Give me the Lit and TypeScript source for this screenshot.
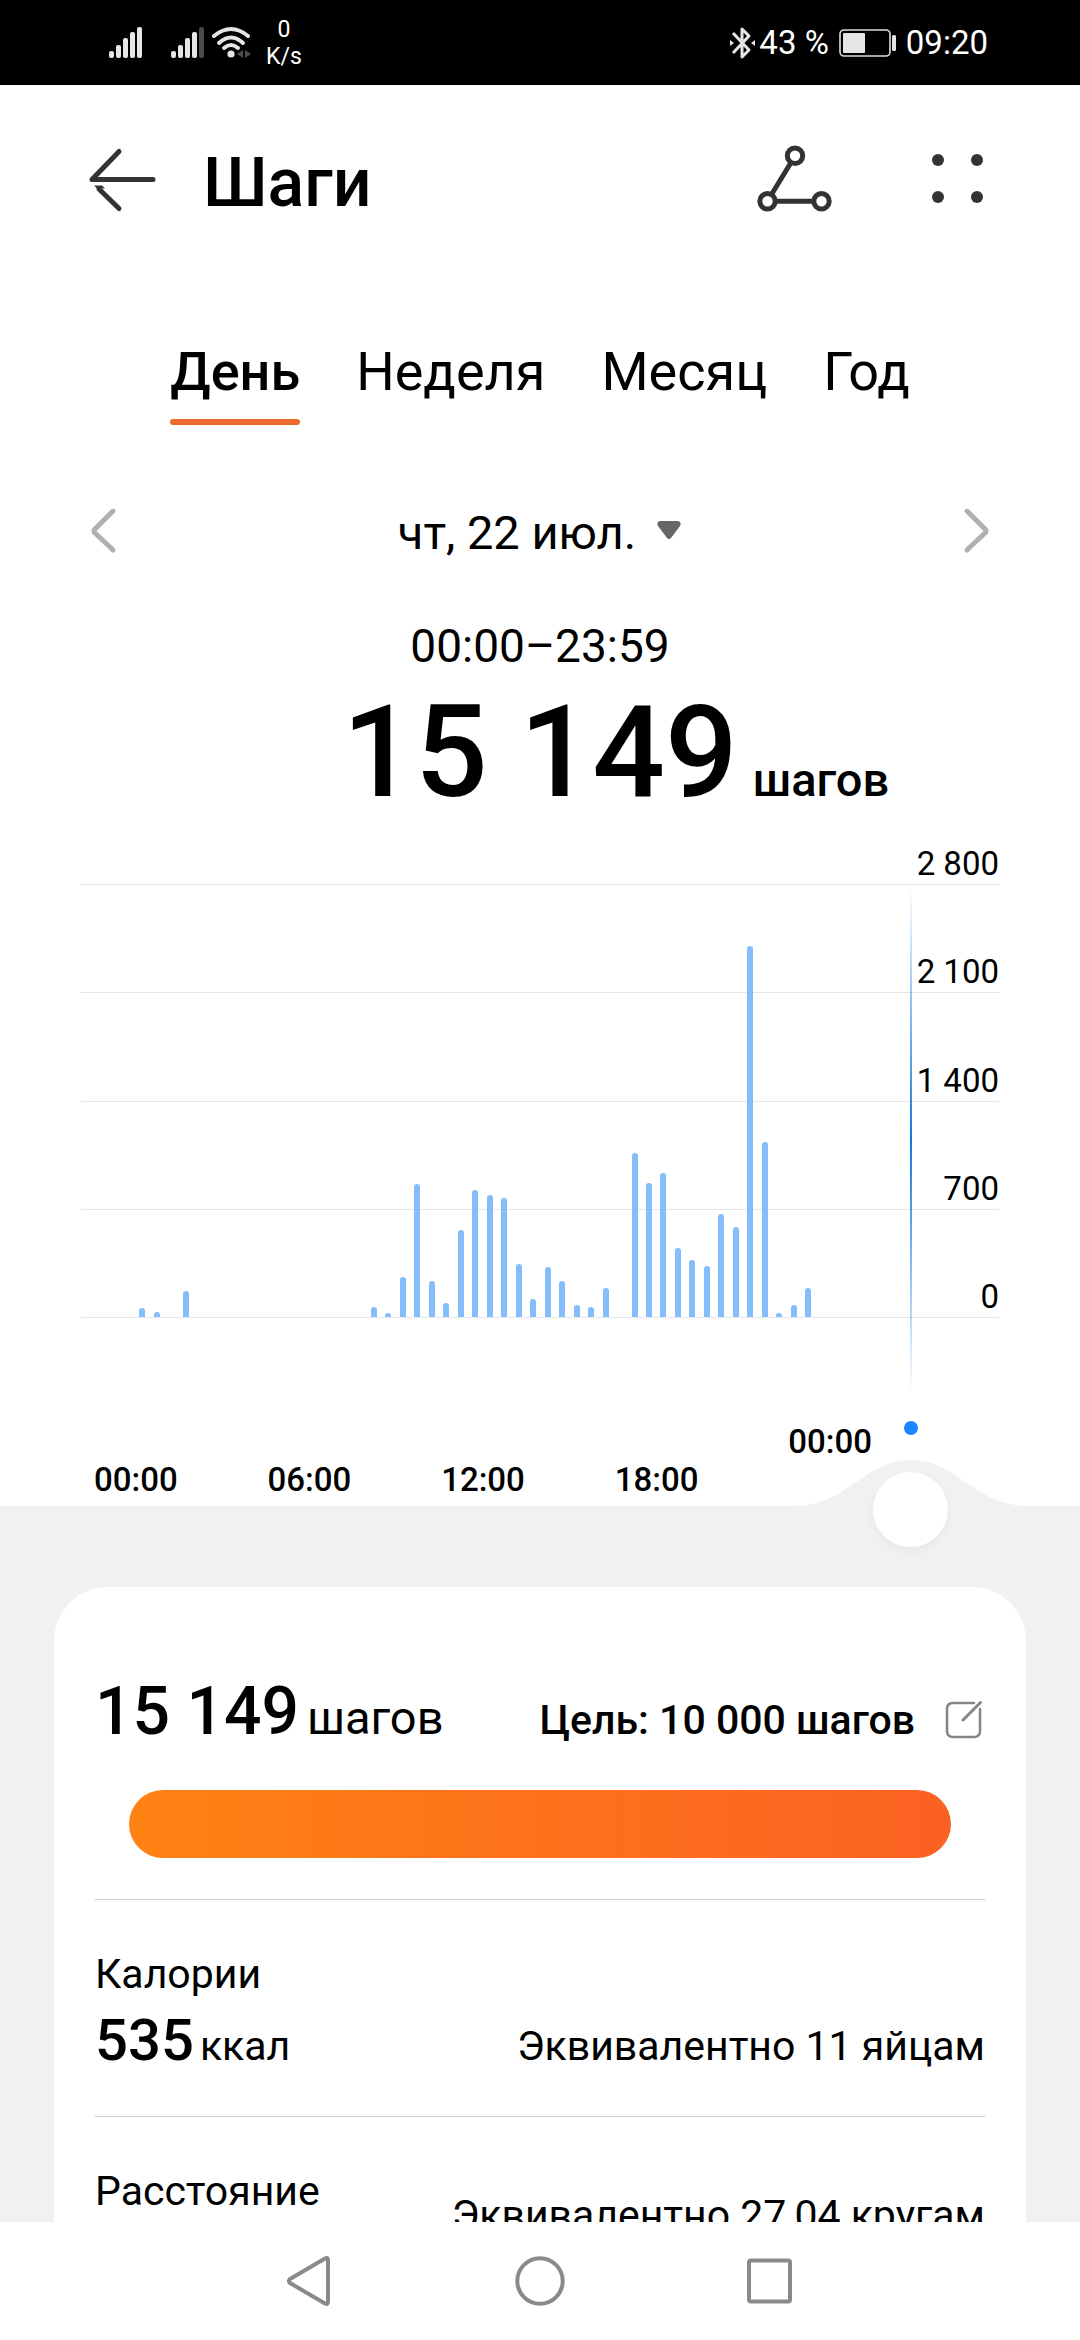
import { LitElement, html, css, svg, nothing } from "lit";
import { customElement, property, state } from "lit/decorators.js";
import { classMap } from "lit/directives/class-map.js";

interface Slot {
  index: number;
  steps: number;
}

interface Metric {
  label: string;
  value?: string;
  unit?: string;
  equivalent: string;
  tall?: boolean;
}

const SCALE_MAX = 2800;
const SCALE_LABELS = ["2 800", "2 100", "1 400", "700", "0"];
const HOUR_LABELS = ["00:00", "06:00", "12:00", "18:00", "00:00"];

/* Steps per half-hour slot of the day. */
const SLOTS: Slot[] = [
  [0, 58], [1, 32], [3, 168], [16, 68], [17, 24], [18, 258], [19, 860],
  [20, 236], [21, 90], [22, 562], [23, 821], [24, 789], [25, 769], [26, 342],
  [27, 120], [28, 323], [29, 236], [30, 81], [31, 65], [32, 187], [34, 1060],
  [35, 866], [36, 931], [37, 446], [38, 368], [39, 330], [40, 666], [41, 585],
  [42, 2404], [43, 1137], [44, 26], [45, 81], [46, 185],
].map(([index, steps]) => ({ index, steps }));

const METRICS: Metric[] = [
  { label: "Калории", value: "535", unit: "ккал", equivalent: "Эквивалентно 11 яйцам" },
  { label: "Расстояние", equivalent: "Эквивалентно 27,04 кругам", tall: true },
];

@customElement("status-bar")
class StatusBar extends LitElement {
  static styles = css`
    :host {
      display: flex;
      justify-content: space-between;
      align-items: center;
      height: 85px;
      padding: 0 92px 0 108px;
      background: #000;
      color: #fff;
      font-size: 33px;
      line-height: 38px;
    }
    .group {
      display: flex;
      align-items: center;
    }
    .signal {
      margin-right: 26px;
    }
    .speed {
      margin-left: 14px;
      font-size: 23px;
      line-height: 27px;
      text-align: center;
    }
    .battery {
      margin: 0 8px 0 9px;
    }
    svg {
      display: block;
    }
  `;

  private bars(lastOff: boolean) {
    const tops = [25, 19, 12, 6, 1];
    return tops.map(
      (top, i) => svg`<rect x=${1 + i * 7} y=${top} width="5" height=${32 - top} rx="2"
        fill=${lastOff && i === 4 ? "#4a4a4a" : "#e6e6e6"} />`,
    );
  }

  render() {
    return html`
      <div class="group">
        <svg class="signal" width="36" height="34" viewBox="0 0 36 34" aria-hidden="true">${this.bars(false)}</svg>
        <svg width="36" height="34" viewBox="0 0 36 34" aria-hidden="true">${this.bars(true)}</svg>
        <svg width="46" height="34" viewBox="0 0 46 34" aria-hidden="true">
          <g fill="none" stroke="#e6e6e6" stroke-width="4" stroke-linecap="round">
            <path d="M8 10Q25 -4 42 10" />
            <path d="M13 17Q25 6 37 17" />
            <path d="M18 22Q25 16 32 22" />
          </g>
          <circle cx="25" cy="28" r="3.6" fill="#e6e6e6" />
          <path d="M37 24v8l-6-4zM39 24v8l6-4z" fill="#4a4a4a" />
        </svg>
        <div class="speed"><div>0</div><div>K/s</div></div>
      </div>
      <div class="group">
        <svg width="30" height="34" viewBox="0 0 30 34" aria-hidden="true">
          <path d="M4 7L20 24L13 31V3L20 10L4 27" fill="none" stroke="#e6e6e6" stroke-width="3" stroke-linejoin="round" />
          <path d="M1 14l4 3l-4 3zM26 14l-4 3l4 3z" fill="#e6e6e6" />
        </svg>
        <span>43 %</span>
        <svg class="battery" width="60" height="34" viewBox="0 0 60 34" aria-hidden="true">
          <rect x="2" y="4" width="50" height="26" rx="4" fill="none" stroke="#dcdcdc" stroke-width="1.6" />
          <rect x="5" y="7" width="22" height="20" rx="1" fill="#e6e6e6" />
          <rect x="54" y="9" width="4" height="16" rx="1.5" fill="#e6e6e6" />
        </svg>
        <span>09:20</span>
      </div>
    `;
  }
}

@customElement("steps-chart")
class StepsChart extends LitElement {
  @property({ attribute: false }) slots: Slot[] = [];

  static styles = css`
    :host {
      display: block;
      position: relative;
      z-index: 1;
      padding-bottom: 8px;
      font-size: 33px;
      line-height: 36px;
    }
    .plot {
      position: relative;
      display: grid;
      grid-template-rows: 48px repeat(4, 1fr);
      height: 481px;
      margin: 0 81px;
    }
    .line {
      display: flex;
      justify-content: flex-end;
      align-items: flex-end;
      padding-bottom: 2px;
      border-bottom: 1px solid #e5e7e7;
    }
    .bars {
      position: absolute;
      inset: 48px 169px 1px 54px;
      display: grid;
      grid-template-columns: repeat(48, 1fr);
      align-items: end;
      justify-items: center;
    }
    .bar {
      grid-row: 1;
      width: 6px;
      border-radius: 3px 3px 0 0;
      background: #84bdf9;
    }
    .hours {
      display: grid;
      grid-template-columns: repeat(5, 1fr);
      height: 74px;
      margin-top: 106px;
      padding: 0 163px 0 49px;
      align-items: end;
      text-align: center;
      font-weight: 500;
    }
    .hours .end {
      align-self: start;
    }
    .cursor {
      position: absolute;
      top: 50px;
      right: 168px;
      width: 2px;
      height: 506px;
      background: linear-gradient(rgba(26, 134, 255, 0), #1478d8 50%, rgba(26, 134, 255, 0));
    }
    .dot {
      position: absolute;
      right: 162px;
      bottom: 71px;
      width: 14px;
      height: 14px;
      border-radius: 50%;
      background: #1a86ff;
    }
    .hump {
      position: absolute;
      right: 52px;
      bottom: 0;
    }
    .slider-box {
      position: absolute;
      left: 98px;
      right: 132px;
      bottom: -41px;
      display: grid;
    }
    .slider {
      width: 100%;
      height: 75px;
      margin: 0;
      appearance: none;
      background: none;
    }
    .slider::-webkit-slider-thumb {
      appearance: none;
      width: 75px;
      height: 75px;
      border-radius: 50%;
      background: #fff;
      box-shadow: 0 4px 12px rgba(0, 0, 0, 0.04);
    }
  `;

  render() {
    return html`
      <div class="plot">
        ${SCALE_LABELS.map((label) => html`<div class="line">${label}</div>`)}
        <div class="bars">
          ${this.slots.map(
            (s) => html`<div
              class="bar"
              style="grid-column:${s.index + 1};height:${(s.steps / SCALE_MAX) * 100}%"
            ></div>`,
          )}
        </div>
      </div>
      <div class="hours">
        ${HOUR_LABELS.map(
          (label, i) => html`<span class=${classMap({ end: i === HOUR_LABELS.length - 1 })}>${label}</span>`,
        )}
      </div>
      <div class="cursor"></div>
      <div class="dot"></div>
      <svg class="hump" width="234" height="46" viewBox="0 0 234 46" aria-hidden="true">
        <path d="M0 46C54 46 70 0 117 0S180 46 234 46Z" fill="#f1f1f1" />
      </svg>
      <div class="slider-box">
        <input class="slider" type="range" min="0" max="48" value="48" aria-label="Время" />
      </div>
    `;
  }
}

@customElement("app-root")
class AppRoot extends LitElement {
  @state() private period = "День";

  static styles = css`
    :host {
      display: flex;
      flex-direction: column;
      height: 100vh;
      background: #fff;
      color: #000;
      font-family: Roboto, "Liberation Sans", sans-serif;
    }
    button {
      padding: 0;
      border: 0;
      background: none;
      color: inherit;
      font: inherit;
      cursor: pointer;
    }
    svg {
      display: block;
    }
    h1,
    p {
      margin: 0;
    }
    status-bar,
    .system {
      flex: none;
    }
    main {
      flex: 1;
      min-height: 0;
      overflow: hidden;
    }
    .header {
      display: flex;
      align-items: center;
      padding: 58px 84px 0;
    }
    .title {
      flex: 1;
      margin-left: 39px;
      font-size: 68px;
      line-height: 80px;
      font-weight: 500;
    }
    .more {
      margin-left: 80px;
    }
    .tabs {
      display: flex;
      justify-content: center;
      gap: 56px;
      margin-top: 117px;
      font-size: 54px;
      line-height: 64px;
    }
    .tab {
      display: grid;
      gap: 15px;
    }
    .tab::after {
      content: "";
      height: 6px;
      border-radius: 3px;
    }
    .tab.active {
      font-weight: 500;
    }
    .tab.active::after {
      background: #ed6b2d;
    }
    .date {
      display: flex;
      justify-content: space-between;
      align-items: center;
      margin-top: 81px;
      padding: 0 90px;
      font-size: 47px;
      line-height: 54px;
    }
    .picker {
      display: flex;
      align-items: center;
      gap: 20px;
    }
    .range {
      margin-top: 59px;
      font-size: 46px;
      line-height: 54px;
      text-align: center;
    }
    .total {
      display: grid;
      grid-template-columns: 1fr auto 1fr;
      align-items: baseline;
      margin: 19px 0 25px;
      font-weight: 500;
    }
    .total-value {
      grid-column: 2;
      font-size: 128px;
      line-height: 120px;
    }
    .total-unit {
      margin-left: 15px;
      font-size: 47px;
      line-height: 54px;
    }
    .details {
      padding: 81px 54px 0;
      background: #f1f1f1;
    }
    .card {
      padding: 79px 41px 0;
      border-radius: 54px 54px 0 0;
      background: #fff;
      font-size: 41px;
      line-height: 48px;
    }
    .summary {
      display: flex;
      align-items: baseline;
    }
    .figure {
      font-weight: 500;
    }
    .summary .figure {
      font-size: 66px;
      line-height: 92px;
    }
    .summary .unit {
      flex: 1;
      margin-left: 8px;
      font-size: 47px;
    }
    .goal {
      display: flex;
      align-items: center;
      gap: 28px;
      font-weight: 500;
    }
    .progress {
      height: 68px;
      margin: 32px 34px 41px;
      border-radius: 34px;
      background: linear-gradient(90deg, #ff8214, #fb6122);
    }
    .metric {
      display: flex;
      justify-content: space-between;
      min-height: 126px;
      padding: 50px 0 40px;
      border-top: 1px solid #cbcbcb;
    }
    .reading {
      display: flex;
      align-items: baseline;
      gap: 6px;
      margin-top: 6px;
    }
    .reading .figure {
      font-size: 58px;
      line-height: 72px;
    }
    .equivalent {
      align-self: flex-end;
      padding-bottom: 6px;
    }
    .tall .equivalent {
      padding-bottom: 54px;
    }
    .system {
      display: flex;
      justify-content: center;
      align-items: center;
      gap: 170px;
      height: 118px;
    }
  `;

  private metric(m: Metric) {
    return html`
      <section class=${classMap({ metric: true, tall: !!m.tall })}>
        <div>
          <p>${m.label}</p>
          ${m.value
            ? html`<p class="reading"><span class="figure">${m.value}</span><span>${m.unit}</span></p>`
            : nothing}
        </div>
        <p class="equivalent">${m.equivalent}</p>
      </section>
    `;
  }

  render() {
    return html`
      <status-bar></status-bar>
      <main>
        <header class="header">
          <button aria-label="Назад">
            <svg width="80" height="80" viewBox="0 0 80 80" fill="none" stroke="#333" stroke-width="5" stroke-linecap="round">
              <path d="M69 36.500H8L35 8.500" stroke-linejoin="round" />
              <path d="M35 65.500L15 46" />
              <path d="M10 42.500h8l3 3h-8z" fill="#333" stroke="none" />
            </svg>
          </button>
          <h1 class="title">Шаги</h1>
          <button aria-label="Маршрут">
            <svg width="90" height="80" viewBox="0 0 90 80" fill="none" stroke="#333" stroke-width="5">
              <circle cx="45" cy="12.700" r="7.700" />
              <circle cx="17.500" cy="58.300" r="7.700" />
              <circle cx="71.500" cy="58.300" r="7.700" />
              <path d="M41 19.500L21.500 51.500M25 58.300H64" />
            </svg>
          </button>
          <button class="more" aria-label="Ещё">
            <svg width="76" height="80" viewBox="0 0 76 80" fill="#333">
              <circle cx="18" cy="17" r="6" />
              <circle cx="57" cy="17" r="6" />
              <circle cx="18" cy="54" r="6" />
              <circle cx="57" cy="54" r="6" />
            </svg>
          </button>
        </header>

        <nav class="tabs">
          ${["День", "Неделя", "Месяц", "Год"].map(
            (name) => html`<button
              class=${classMap({ tab: true, active: name === this.period })}
              @click=${() => (this.period = name)}
            >${name}</button>`,
          )}
        </nav>

        <div class="date">
          <button aria-label="Предыдущий день">
            <svg width="27" height="48" viewBox="0 2 27 48" fill="none" stroke="#b0b0b0" stroke-width="5" stroke-linecap="round" stroke-linejoin="round">
              <path d="M23 4L4.500 22.500Q3.500 24 4.500 25.500L23 43" />
            </svg>
          </button>
          <button class="picker">
            чт, 22 июл.
            <svg width="26" height="24" viewBox="0 2 26 24" aria-hidden="true">
              <path d="M4 2H22Q26 3 24 7L15 19Q13 21 11 19L2 7Q0 3 4 2Z" fill="#666" />
            </svg>
          </button>
          <button aria-label="Следующий день">
            <svg width="27" height="48" viewBox="0 2 27 48" fill="none" stroke="#b0b0b0" stroke-width="5" stroke-linecap="round" stroke-linejoin="round">
              <path d="M4 4L22.500 22.500Q23.500 24 22.500 25.500L4 43" />
            </svg>
          </button>
        </div>

        <p class="range">00:00–23:59</p>
        <div class="total">
          <span class="total-value">15 149</span>
          <span class="total-unit">шагов</span>
        </div>

        <steps-chart .slots=${SLOTS}></steps-chart>

        <div class="details">
          <div class="card">
            <div class="summary">
              <span class="figure">15 149</span>
              <span class="unit">шагов</span>
              <button class="goal">
                Цель: 10 000 шагов
                <svg width="42" height="42" viewBox="0 0 42 42" fill="none" stroke="#858585" stroke-width="2.500" stroke-linecap="round" aria-hidden="true">
                  <path d="M31 4H10Q4 4 4 10V32Q4 38 10 38H31Q37 38 37 32V10" />
                  <path d="M20 21L37.500 3.500" stroke-width="3" />
                </svg>
              </button>
            </div>
            <div class="progress" role="progressbar" aria-label="Цель" aria-valuenow="100"></div>
            ${METRICS.map((m) => this.metric(m))}
          </div>
        </div>
      </main>

      <nav class="system">
        <button aria-label="Назад">
          <svg width="60" height="60" viewBox="0 0 60 60" fill="none" stroke="#8a8a8a" stroke-width="4" stroke-linejoin="round">
            <path d="M10 28L45 7.500Q48 6 48 9V51Q48 54 45 52.500L10 32Q8 30 10 28Z" />
          </svg>
        </button>
        <button aria-label="Домой">
          <svg width="60" height="60" viewBox="0 0 60 60" fill="none" stroke="#8a8a8a" stroke-width="4">
            <circle cx="30" cy="30" r="22.700" />
          </svg>
        </button>
        <button aria-label="Недавние">
          <svg width="60" height="60" viewBox="0 0 60 60" fill="none" stroke="#8a8a8a" stroke-width="4">
            <rect x="9" y="9.500" width="41" height="41" rx="2" />
          </svg>
        </button>
      </nav>
    `;
  }
}
